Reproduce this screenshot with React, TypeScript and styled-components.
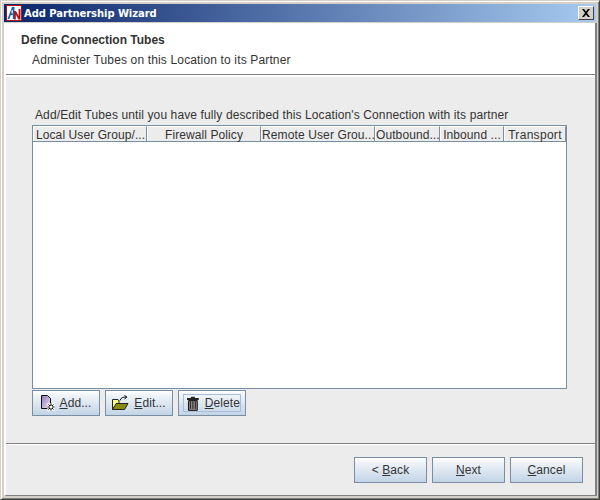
import React from "react";
import styled, { createGlobalStyle } from "styled-components";

const Global = createGlobalStyle`
  html, body { margin: 0; padding: 0; background: #d4d0c8; }
  #root { width: 600px; height: 500px; overflow: hidden; }
`;

const Frame = styled.div`
  width: 600px;
  height: 500px;
  box-sizing: border-box;
  background: #d4d0c8;
  border-style: solid;
  border-width: 1px;
  border-color: #d4d0c8 #404040 #404040 #d4d0c8;
  box-shadow: inset 1px 1px 0 #fff, inset -1px -1px 0 #808080;
  padding: 3px;
  display: flex;
  flex-direction: column;
  font-family: "Liberation Sans", Arial, sans-serif;
  font-size: 12px;
  color: #333;
`;

const TitleBar = styled.div`
  height: 18px;
  flex: none;
  background: linear-gradient(to right, #0a246a, #a6caf0);
  display: flex;
  align-items: center;
  padding: 0 2px 0 2px;
  margin-bottom: 1px;
`;

const TitleText = styled.div`
  margin-left: 2px;
  flex: 1;
  color: #fff;
  font-family: "DejaVu Sans", Verdana, sans-serif;
  font-weight: 700;
  font-size: 10px;
  letter-spacing: -0.07px;
`;

const CloseBox = styled.div`
  width: 16px;
  height: 14px;
  box-sizing: border-box;
  background: #d4d0c8;
  border: 1px solid;
  border-color: #fff #404040 #404040 #fff;
  display: flex;
  align-items: center;
  justify-content: center;
`;

const Content = styled.div`
  flex: 1;
  display: flex;
  flex-direction: column;
  background: #ececec;
  border-left: 2px solid #fff;
  border-right: 2px solid #808080;
  border-bottom: 1px solid #808080;
  margin-right: -1px;
  min-height: 0;
`;

const Header = styled.div`
  flex: none;
  height: 51px;
  box-sizing: border-box;
  background: #fff;
  padding: 10px 0 0 15px;
`;

const Heading = styled.div`
  font-weight: 700;
  line-height: 14px;
  color: #333;
`;

const SubHeading = styled.div`
  margin: 6px 0 0 11px;
  line-height: 14px;
  letter-spacing: 0.15px;
`;

const Rule = styled.div`
  flex: none;
  height: 1px;
  background: #808080;
  border-bottom: 1px solid #fff;
`;

const Main = styled.div`
  flex: 1;
  box-sizing: border-box;
  padding: 31px 29px 0 26px;
  display: flex;
  flex-direction: column;
  border-top: 1px solid #fff;
`;

const Instruction = styled.div`
  line-height: 14px;
  margin-left: 3px;
  margin-bottom: 3px;
  letter-spacing: 0.115px;
`;

const Table = styled.div`
  width: 535px;
  height: 264px;
  flex: none;
  box-sizing: border-box;
  background: #fff;
  border: 1px solid #7a8ea3;
`;

const HeaderRow = styled.div`
  display: flex;
  height: 15px;
  background: #ececec;
  border-bottom: 1px solid #7a8ea3;
`;

const HeaderCell = styled.div<{ $w: number; $pad?: number; $track?: number }>`
  width: ${(p) => p.$w}px;
  flex: none;
  box-sizing: border-box;
  border-right: 1px solid #7a8ea3;
  border-top: 1px solid #fff;
  border-left: 1px solid #fff;
  text-align: ${(p) => (p.$pad === undefined ? "center" : "left")};
  padding-left: ${(p) => p.$pad ?? 0}px;
  line-height: 16px;
  white-space: nowrap;
  letter-spacing: ${(p) => p.$track ?? 0.09}px;
`;

const ButtonRow = styled.div`
  display: flex;
  gap: 5px;
  margin-top: 1px;
`;

const Button = styled.div<{ $w: number; $gap?: number }>`
  width: ${(p) => p.$w}px;
  height: 26px;
  box-sizing: border-box;
  border: 1px solid #7a8ea3;
  background: linear-gradient(to bottom, #ffffff 0%, #eef3f8 20%, #c3d4e6 100%);
  display: flex;
  align-items: center;
  justify-content: center;
  gap: ${(p) => p.$gap ?? 5}px;
  letter-spacing: 0.09px;
  color: #333;
`;

const FocusRing = styled.div`
  width: 58px;
  height: 18px;
  flex: none;
  box-sizing: border-box;
  display: flex;
  align-items: center;
  gap: 6px;
  padding-left: 3px;
  white-space: nowrap;
  border: 1px solid #a9bed6;
`;

const Key = styled.span`
  text-decoration: underline;
`;

const Rule2 = styled.div`
  flex: none;
  height: 1px;
  background: #808080;
  border-bottom: 1px solid #fff;
`;

const Footer = styled.div`
  flex: none;
  height: 50px;
  box-sizing: border-box;
  padding: 12px 12px 0 0;
  display: flex;
  justify-content: flex-end;
  gap: 5px;
`;

const MainFill = styled.div`
  flex: 1;
`;

const Logo = () => (
  <svg width="16" height="16" viewBox="0 0 16 16">
    <rect x="0.5" y="0.5" width="15" height="15" fill="#fff" stroke="#b01818" />
    <path d="M1.5 14 L6 2 H8.5 V14 H6.8 V10 H4.8 L3.4 14 Z" fill="#1f5fa8" />
    <rect x="5.6" y="5" width="1.2" height="3.5" fill="#fff" />
    <path d="M8 6 H10 L12.6 11 V4 H14.5 V14.5 H12.4 L9.8 9.5 V14.5 H8 Z" fill="#a01820" />
  </svg>
);

const CloseIcon = () => (
  <svg width="10" height="8" viewBox="0 0 10 8">
    <path d="M1 0 H3 L5 2.5 L7 0 H9 L6 4 L9 8 H7 L5 5.5 L3 8 H1 L4 4 Z" fill="#000" />
  </svg>
);

const AddIcon = () => (
  <svg width="16" height="16" viewBox="0 0 16 16">
    <defs>
      <linearGradient id="pg" x1="0" y1="0" x2="1" y2="1">
        <stop offset="0" stopColor="#8a78b8" />
        <stop offset="1" stopColor="#f4e4ee" />
      </linearGradient>
    </defs>
    <path d="M0.5 0.5 H6.5 L9.5 3.5 V13.5 H0.5 Z" fill="url(#pg)" stroke="#111" />
    <rect x="6" y="8" width="8" height="8" fill="#fff" opacity="0.6" />
    <path d="M10 8.5 V15.5 M6.5 12 H13.5 M7.5 9.5 L12.5 14.5 M12.5 9.5 L7.5 14.5" stroke="#111" />
    <rect x="9" y="11" width="2" height="2" fill="#fff" />
  </svg>
);

const EditIcon = () => (
  <svg width="17" height="16" viewBox="0 0 17 16">
    <path d="M0.5 4.5 H6 L7 6 V14.5 H0.5 Z" fill="#ffff55" stroke="#222" />
    <path d="M0.5 14.5 L4 8.5 H16 L12.5 14.5 Z" fill="#8a8a10" stroke="#222" />
    <path d="M1.5 6 h3 M1.5 8 h2 M1.5 10 h1" stroke="#fff" />
    <path d="M8 5.5 C9 2.5 11 2 14 2 M12.5 0.5 L15 2 L12.5 4" fill="none" stroke="#111" />
  </svg>
);

const TrashIcon = () => (
  <svg width="12" height="15" viewBox="0 0 12 15">
    <path d="M0 2 H12 V4 H0 Z M4 0.5 H8 V2 H4 Z" fill="#222" />
    <path d="M1.5 4.5 H10.5 V14.5 H1.5 Z" fill="#8a8a8a" stroke="#111" />
    <path d="M3.5 5 V13 M6 5 V13 M8.5 5 V13" stroke="#222" />
  </svg>
);

const columns = [
  { w: 114, t: "Local User Group/...", pad: 2 },
  { w: 114, t: "Firewall Policy" },
  { w: 114, t: "Remote User Grou...", pad: 0, track: 0.12 },
  { w: 65, t: "Outbound...", pad: 0 },
  { w: 64, t: "Inbound ..." },
  { w: 62, t: "Transport", track: 0.3 },
];

export default function App() {
  return (
    <Frame>
      <Global />
      <TitleBar>
        <Logo />
        <TitleText>Add Partnership Wizard</TitleText>
        <CloseBox>
          <CloseIcon />
        </CloseBox>
      </TitleBar>
      <Content>
        <Header>
          <Heading>Define Connection Tubes</Heading>
          <SubHeading>Administer Tubes on this Location to its Partner</SubHeading>
        </Header>
        <Rule />
        <Main>
          <Instruction>
            Add/Edit Tubes until you have fully described this Location's Connection with its partner
          </Instruction>
          <Table>
            <HeaderRow>
              {columns.map((c) => (
                <HeaderCell key={c.t} $w={c.w} $pad={c.pad} $track={c.track}>
                  {c.t}
                </HeaderCell>
              ))}
            </HeaderRow>
          </Table>
          <ButtonRow>
            <Button $w={68} $gap={3}>
              <AddIcon />
              <span>
                <Key>A</Key>dd...
              </span>
            </Button>
            <Button $w={68}>
              <EditIcon />
              <span>
                <Key>E</Key>dit...
              </span>
            </Button>
            <Button $w={68}>
              <FocusRing>
                <TrashIcon />
                <span>
                  <Key>D</Key>elete
                </span>
              </FocusRing>
            </Button>
          </ButtonRow>
          <MainFill />
        </Main>
        <Rule2 />
        <Footer>
          <Button $w={73}>
            <span>
              &lt; <Key>B</Key>ack
            </span>
          </Button>
          <Button $w={73}>
            <span>
              <Key>N</Key>ext
            </span>
          </Button>
          <Button $w={73}>
            <span>
              <Key>C</Key>ancel
            </span>
          </Button>
        </Footer>
      </Content>
    </Frame>
  );
}
